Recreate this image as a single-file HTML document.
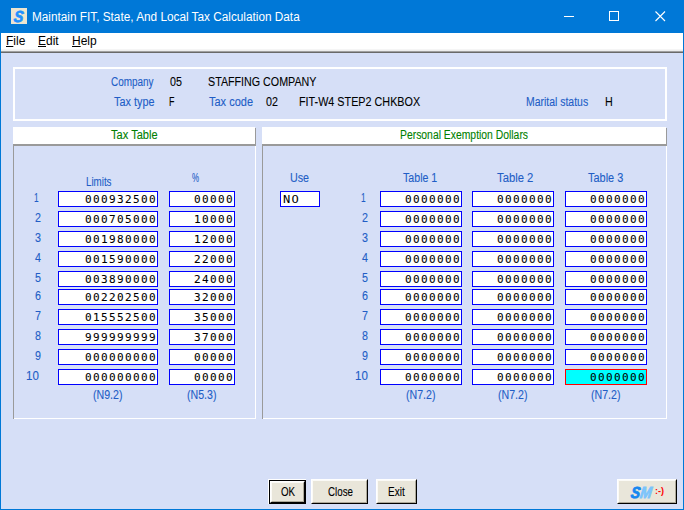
<!DOCTYPE html><html><head><meta charset="utf-8"><title>Maintain FIT, State, And Local Tax Calculation Data</title><style>

html,body{margin:0;padding:0;}
body{width:684px;height:510px;overflow:hidden;position:relative;background:#d6dff7;font-family:"Liberation Sans",sans-serif;}
div,span{box-sizing:border-box;}
.abs{position:absolute;}
.t{position:absolute;white-space:nowrap;-webkit-text-stroke:0.1px;transform-origin:0 0;line-height:16px;height:16px;}
.in{position:absolute;height:16px;border:1px solid #0000ff;background:#fff;overflow:hidden;}
.in span{position:absolute;top:1px;right:-0.1px;font-family:"DejaVu Sans Mono","Liberation Mono",monospace;font-size:11px;letter-spacing:1.38px;line-height:14px;color:#000;white-space:nowrap;-webkit-text-stroke:0.08px #000;}
.in span.l{right:auto;left:2.2px;top:1px;font-size:11px;letter-spacing:1.2px;-webkit-text-stroke:0;transform:scaleX(1.1);transform-origin:0 0;}
.btn{position:absolute;height:25px;background:#e9e6da;border:1px solid;border-color:#fff #000 #000 #fff;}
.btn:after{content:"";position:absolute;left:0;top:0;right:0;bottom:0;border:1px solid;border-color:#fbfaf6 #aca899 #aca899 #fbfaf6;}
#title{position:absolute;left:0;top:0;width:684px;height:33px;background:#0078d7;}
#menu{position:absolute;left:1px;top:33px;width:682px;height:18px;background:#fff;}
.m{position:absolute;top:-1px;font-size:12px;line-height:18px;color:#000;white-space:nowrap;transform-origin:0 0;}
.m u{text-decoration:underline;text-decoration-thickness:1px;text-underline-offset:1px;}

</style></head><body>
<div class="abs" style="left:0;top:0;width:1px;height:510px;background:#0078d7"></div>
<div class="abs" style="left:683px;top:0;width:1px;height:510px;background:#0078d7"></div>
<div class="abs" style="left:0;top:509px;width:684px;height:1px;background:#0078d7"></div>
<div id="title">
<div class="abs" style="left:11px;top:8px;width:16px;height:16px;background:#ece5d0;overflow:hidden"><span style="position:absolute;left:2.5px;top:-1px;transform:scaleX(0.9) skewX(-8deg);transform-origin:0 50%;font:italic bold 16px/19px 'Liberation Sans',sans-serif;color:#1e90ff;-webkit-text-stroke:0.7px #1e90ff;">S</span></div>
<span id="ttl" class="abs" style="left:31.6px;top:8px;font-size:12px;line-height:18px;color:#fff;white-space:nowrap;transform-origin:0 0;transform:scaleX(0.982);">Maintain FIT, State, And Local Tax Calculation Data</span>
<svg class="abs" style="left:556px;top:0" width="128" height="33" viewBox="0 0 128 33"><path d="M8 16.5h10" stroke="#fff" stroke-width="1" fill="none"/><rect x="53.5" y="11.5" width="9" height="9" stroke="#fff" stroke-width="1" fill="none"/><path d="M99.5 11.5l9.5 9.5M109 11.5l-9.5 9.5" stroke="#fff" stroke-width="1.1" fill="none"/></svg>
</div>
<div id="menu"><span class="m" style="left:5px"><u>F</u>ile</span><span class="m" style="left:37px"><u>E</u>dit</span><span class="m" style="left:71px"><u>H</u>elp</span></div>
<div class="abs" style="left:1px;top:49px;width:682px;height:1px;background:#f5f5f5"></div><div class="abs" style="left:1px;top:50px;width:682px;height:1px;background:#eee"></div>
<div class="abs" style="left:1px;top:51px;width:682px;height:1px;background:#a0a0a0"></div>
<div class="abs" style="left:1px;top:52px;width:682px;height:1px;background:#696969"></div>
<div class="abs" style="left:13px;top:67px;width:654px;height:54px;border:2px solid #fff"></div>
<div class="abs" style="left:13px;top:127px;width:242px;height:17px;background:#fff"></div>
<div class="abs" style="left:255px;top:128px;width:1px;height:18px;background:#9a9a9a"></div>
<div class="abs" style="left:13px;top:144px;width:243px;height:2px;background:#9a9a9a"></div>
<div class="abs" style="left:13px;top:146px;width:1px;height:273px;background:#9a9a9a"></div>
<div class="abs" style="left:255px;top:146px;width:1px;height:273px;background:#fff"></div>
<div class="abs" style="left:14px;top:418px;width:242px;height:1px;background:#fff"></div>
<div class="abs" style="left:262px;top:127px;width:404px;height:17px;background:#fff"></div>
<div class="abs" style="left:666px;top:128px;width:1px;height:18px;background:#9a9a9a"></div>
<div class="abs" style="left:262px;top:144px;width:405px;height:2px;background:#9a9a9a"></div>
<div class="abs" style="left:262px;top:146px;width:1px;height:273px;background:#9a9a9a"></div>
<div class="abs" style="left:666px;top:146px;width:1px;height:273px;background:#fff"></div>
<div class="abs" style="left:263px;top:418px;width:404px;height:1px;background:#fff"></div>
<div class="in" style="left:58px;top:191px;width:100px"><span>000932500</span></div>
<div class="in" style="left:169px;top:191px;width:66px"><span>00000</span></div>
<div class="in" style="left:380px;top:191px;width:82px"><span>0000000</span></div>
<div class="in" style="left:472px;top:191px;width:82px"><span>0000000</span></div>
<div class="in" style="left:565px;top:191px;width:82px"><span>0000000</span></div>
<div class="in" style="left:58px;top:211px;width:100px"><span>000705000</span></div>
<div class="in" style="left:169px;top:211px;width:66px"><span>10000</span></div>
<div class="in" style="left:380px;top:211px;width:82px"><span>0000000</span></div>
<div class="in" style="left:472px;top:211px;width:82px"><span>0000000</span></div>
<div class="in" style="left:565px;top:211px;width:82px"><span>0000000</span></div>
<div class="in" style="left:58px;top:231px;width:100px"><span>001980000</span></div>
<div class="in" style="left:169px;top:231px;width:66px"><span>12000</span></div>
<div class="in" style="left:380px;top:231px;width:82px"><span>0000000</span></div>
<div class="in" style="left:472px;top:231px;width:82px"><span>0000000</span></div>
<div class="in" style="left:565px;top:231px;width:82px"><span>0000000</span></div>
<div class="in" style="left:58px;top:251px;width:100px"><span>001590000</span></div>
<div class="in" style="left:169px;top:251px;width:66px"><span>22000</span></div>
<div class="in" style="left:380px;top:251px;width:82px"><span>0000000</span></div>
<div class="in" style="left:472px;top:251px;width:82px"><span>0000000</span></div>
<div class="in" style="left:565px;top:251px;width:82px"><span>0000000</span></div>
<div class="in" style="left:58px;top:271px;width:100px"><span>003890000</span></div>
<div class="in" style="left:169px;top:271px;width:66px"><span>24000</span></div>
<div class="in" style="left:380px;top:271px;width:82px"><span>0000000</span></div>
<div class="in" style="left:472px;top:271px;width:82px"><span>0000000</span></div>
<div class="in" style="left:565px;top:271px;width:82px"><span>0000000</span></div>
<div class="in" style="left:58px;top:289px;width:100px"><span>002202500</span></div>
<div class="in" style="left:169px;top:289px;width:66px"><span>32000</span></div>
<div class="in" style="left:380px;top:289px;width:82px"><span>0000000</span></div>
<div class="in" style="left:472px;top:289px;width:82px"><span>0000000</span></div>
<div class="in" style="left:565px;top:289px;width:82px"><span>0000000</span></div>
<div class="in" style="left:58px;top:309px;width:100px"><span>015552500</span></div>
<div class="in" style="left:169px;top:309px;width:66px"><span>35000</span></div>
<div class="in" style="left:380px;top:309px;width:82px"><span>0000000</span></div>
<div class="in" style="left:472px;top:309px;width:82px"><span>0000000</span></div>
<div class="in" style="left:565px;top:309px;width:82px"><span>0000000</span></div>
<div class="in" style="left:58px;top:329px;width:100px"><span>999999999</span></div>
<div class="in" style="left:169px;top:329px;width:66px"><span>37000</span></div>
<div class="in" style="left:380px;top:329px;width:82px"><span>0000000</span></div>
<div class="in" style="left:472px;top:329px;width:82px"><span>0000000</span></div>
<div class="in" style="left:565px;top:329px;width:82px"><span>0000000</span></div>
<div class="in" style="left:58px;top:349px;width:100px"><span>000000000</span></div>
<div class="in" style="left:169px;top:349px;width:66px"><span>00000</span></div>
<div class="in" style="left:380px;top:349px;width:82px"><span>0000000</span></div>
<div class="in" style="left:472px;top:349px;width:82px"><span>0000000</span></div>
<div class="in" style="left:565px;top:349px;width:82px"><span>0000000</span></div>
<div class="in" style="left:58px;top:369px;width:100px"><span>000000000</span></div>
<div class="in" style="left:169px;top:369px;width:66px"><span>00000</span></div>
<div class="in" style="left:380px;top:369px;width:82px"><span>0000000</span></div>
<div class="in" style="left:472px;top:369px;width:82px"><span>0000000</span></div>
<div class="in" style="left:565px;top:369px;width:82px;background:#00ffff;border-color:#ff0000"><span>0000000</span></div>
<div class="in" style="left:280px;top:191px;width:40px"><span class="l">NO</span></div>
<div class="abs" style="left:268px;top:479px;width:38px;height:25px;background:#fff"></div>
<div class="abs" style="left:269px;top:480px;width:37px;height:24px;background:#000"></div>
<div class="btn" style="left:270px;top:481px;width:35px;height:22px"></div>
<div class="btn" style="left:311px;top:479px;width:57px;height:25px"></div>
<div class="btn" style="left:376px;top:479px;width:41px;height:25px"></div>
<div class="btn" style="left:617px;top:479px;width:60px;height:25px"><span class="abs" style="left:12.5px;top:3.5px;font:italic bold 16px/18px 'Liberation Sans',sans-serif;color:#1787f0;white-space:nowrap;transform:scaleX(0.86) skewX(-10deg);transform-origin:0 50%;-webkit-text-stroke:0.9px">S<span style="color:#7cc4fb">M</span></span><span class="abs" style="left:37px;top:4px;font:bold 9px/14px 'Liberation Sans',sans-serif;color:#ff0000;white-space:nowrap">:-)</span></div>
<span class="t" id="t0" style="left:111.00px;top:74.00px;font-size:12.5px;color:#215dc6;transform:scaleX(0.7963)">Company</span>
<span class="t" id="t1" style="left:114.00px;top:94.00px;font-size:12.5px;color:#215dc6;transform:scaleX(0.8696)">Tax type</span>
<span class="t" id="t2" style="left:209.00px;top:94.00px;font-size:12.5px;color:#215dc6;transform:scaleX(0.8800)">Tax code</span>
<span class="t" id="t3" style="left:526.16px;top:94.00px;font-size:12.5px;color:#215dc6;transform:scaleX(0.8356)">Marital status</span>
<span class="t" id="t4" style="left:170.00px;top:74.00px;font-size:12.5px;color:#000;transform:scaleX(0.8571)">05</span>
<span class="t" id="t5" style="left:208.14px;top:74.00px;font-size:12.5px;color:#000;transform:scaleX(0.8560)">STAFFING COMPANY</span>
<span class="t" id="t6" style="left:169.29px;top:94.00px;font-size:12.5px;color:#000;transform:scaleX(0.7143)">F</span>
<span class="t" id="t7" style="left:266.00px;top:94.00px;font-size:12.5px;color:#000;transform:scaleX(0.8571)">02</span>
<span class="t" id="t8" style="left:299.14px;top:94.00px;font-size:12.5px;color:#000;transform:scaleX(0.8633)">FIT-W4 STEP2 CHKBOX</span>
<span class="t" id="t9" style="left:605.14px;top:94.00px;font-size:12.5px;color:#000;transform:scaleX(0.8571)">H</span>
<span class="t" id="t10" style="left:111.00px;top:127.00px;font-size:12.5px;color:#008000;transform:scaleX(0.8868)">Tax Table</span>
<span class="t" id="t11" style="left:400.17px;top:127.00px;font-size:12.5px;color:#008000;transform:scaleX(0.8301)">Personal Exemption Dollars</span>
<span class="t" id="t12" style="left:86.22px;top:174.00px;font-size:12.5px;color:#215dc6;transform:scaleX(0.7812)">Limits</span>
<span class="t" id="t13" style="left:192.00px;top:170.00px;font-size:12.5px;color:#215dc6;transform:scaleX(0.6364)">%</span>
<span class="t" id="t14" style="left:290.14px;top:170.00px;font-size:12.5px;color:#215dc6;transform:scaleX(0.8571)">Use</span>
<span class="t" id="t15" style="left:403.00px;top:170.00px;font-size:12.5px;color:#215dc6;transform:scaleX(0.8500)">Table 1</span>
<span class="t" id="t16" style="left:497.00px;top:170.00px;font-size:12.5px;color:#215dc6;transform:scaleX(0.9000)">Table 2</span>
<span class="t" id="t17" style="left:588.00px;top:170.00px;font-size:12.5px;color:#215dc6;transform:scaleX(0.8750)">Table 3</span>
<span class="t" id="t18" style="left:34.33px;top:190.00px;font-size:12.5px;color:#215dc6;transform:scaleX(0.6667)">1</span>
<span class="t" id="t19" style="left:361.33px;top:190.00px;font-size:12.5px;color:#215dc6;transform:scaleX(0.6667)">1</span>
<span class="t" id="t20" style="left:35.00px;top:210.00px;font-size:12.5px;color:#215dc6;transform:scaleX(0.8571)">2</span>
<span class="t" id="t21" style="left:362.00px;top:210.00px;font-size:12.5px;color:#215dc6;transform:scaleX(0.8571)">2</span>
<span class="t" id="t22" style="left:35.00px;top:230.00px;font-size:12.5px;color:#215dc6;transform:scaleX(0.8571)">3</span>
<span class="t" id="t23" style="left:362.00px;top:230.00px;font-size:12.5px;color:#215dc6;transform:scaleX(0.8571)">3</span>
<span class="t" id="t24" style="left:35.00px;top:250.00px;font-size:12.5px;color:#215dc6;transform:scaleX(0.8571)">4</span>
<span class="t" id="t25" style="left:362.00px;top:250.00px;font-size:12.5px;color:#215dc6;transform:scaleX(0.8571)">4</span>
<span class="t" id="t26" style="left:35.00px;top:270.00px;font-size:12.5px;color:#215dc6;transform:scaleX(0.8571)">5</span>
<span class="t" id="t27" style="left:362.00px;top:270.00px;font-size:12.5px;color:#215dc6;transform:scaleX(0.8571)">5</span>
<span class="t" id="t28" style="left:35.00px;top:288.00px;font-size:12.5px;color:#215dc6;transform:scaleX(0.8571)">6</span>
<span class="t" id="t29" style="left:362.00px;top:288.00px;font-size:12.5px;color:#215dc6;transform:scaleX(0.8571)">6</span>
<span class="t" id="t30" style="left:35.00px;top:308.00px;font-size:12.5px;color:#215dc6;transform:scaleX(0.8571)">7</span>
<span class="t" id="t31" style="left:362.00px;top:308.00px;font-size:12.5px;color:#215dc6;transform:scaleX(0.8571)">7</span>
<span class="t" id="t32" style="left:35.00px;top:328.00px;font-size:12.5px;color:#215dc6;transform:scaleX(0.8571)">8</span>
<span class="t" id="t33" style="left:362.00px;top:328.00px;font-size:12.5px;color:#215dc6;transform:scaleX(0.8571)">8</span>
<span class="t" id="t34" style="left:35.00px;top:348.00px;font-size:12.5px;color:#215dc6;transform:scaleX(0.8571)">9</span>
<span class="t" id="t35" style="left:362.00px;top:348.00px;font-size:12.5px;color:#215dc6;transform:scaleX(0.8571)">9</span>
<span class="t" id="t36" style="left:26.08px;top:368.00px;font-size:12.5px;color:#215dc6;transform:scaleX(0.9231)">10</span>
<span class="t" id="t37" style="left:355.08px;top:368.00px;font-size:12.5px;color:#215dc6;transform:scaleX(0.9231)">10</span>
<span class="t" id="t38" style="left:93.15px;top:387.00px;font-size:12.5px;color:#215dc6;transform:scaleX(0.8485)">(N9.2)</span>
<span class="t" id="t39" style="left:187.15px;top:387.00px;font-size:12.5px;color:#215dc6;transform:scaleX(0.8485)">(N5.3)</span>
<span class="t" id="t40" style="left:406.15px;top:387.00px;font-size:12.5px;color:#215dc6;transform:scaleX(0.8485)">(N7.2)</span>
<span class="t" id="t41" style="left:498.15px;top:387.00px;font-size:12.5px;color:#215dc6;transform:scaleX(0.8485)">(N7.2)</span>
<span class="t" id="t42" style="left:591.15px;top:387.00px;font-size:12.5px;color:#215dc6;transform:scaleX(0.8485)">(N7.2)</span>
<span class="t" id="t43" style="left:281.00px;top:484.00px;font-size:12.5px;color:#000;transform:scaleX(0.7778)">OK</span>
<span class="t" id="t44" style="left:328.00px;top:484.00px;font-size:12.5px;color:#000;transform:scaleX(0.7812)">Close</span>
<span class="t" id="t45" style="left:388.20px;top:484.00px;font-size:12.5px;color:#000;transform:scaleX(0.8000)">Exit</span>
</body></html>
